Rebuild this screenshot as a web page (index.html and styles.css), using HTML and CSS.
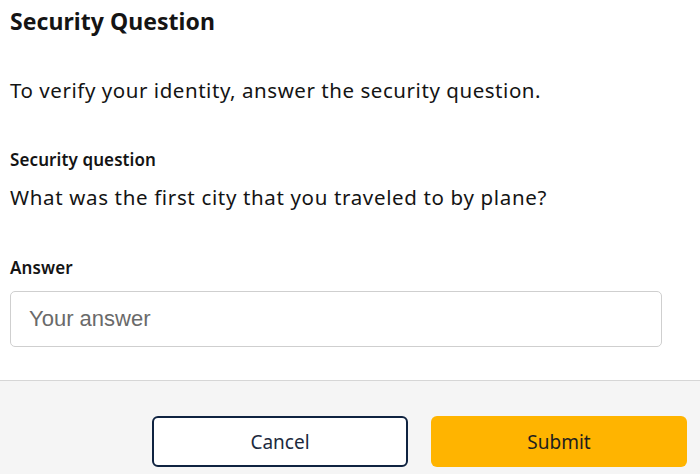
FILE: index.html
```html
<!DOCTYPE html>
<html lang="en">
<head>
    <meta charset="UTF-8">
    <meta name="viewport" content="width=device-width, initial-scale=1.0">
    <title>Security Question</title>
    <link rel="stylesheet" href="styles.css">
</head>
<body>
    <div class="dialog">
        <div class="content">
            <h2 class="title">Security Question</h2>
            <p class="intro">To verify your identity, answer the security question.</p>

            <div class="field">
                <div class="label">Security question</div>
                <div class="question">What was the first city that you traveled to by plane?</div>
            </div>

            <div class="field answer-field">
                <label class="label" for="answer">Answer</label>
                <input type="text" id="answer" class="input" placeholder="Your answer">
            </div>
        </div>

        <div class="footer">
            <button class="btn btn-cancel">Cancel</button>
            <button class="btn btn-submit">Submit</button>
        </div>
    </div>
</body>
</html>
```

FILE: styles.css
```css
body {
    margin: 0;
    font-family: 'Noto Sans', sans-serif;
    color: #141414;
    background: #fff;
}

.dialog {
    width: 700px;
    height: 474px;
    display: flex;
    flex-direction: column;
}

.content {
    box-sizing: border-box;
    height: 381px;
    padding: 6px 38px 0 10px;
    border-bottom: 1px solid #d6d6d6;
}

.title {
    margin: 0;
    font-size: 23px;
    font-weight: 700;
    line-height: 30px;
    letter-spacing: 0.05px;
}

.intro {
    margin: 41px 0 0;
    font-size: 20.5px;
    line-height: 26px;
    letter-spacing: 0.55px;
}

.field {
    margin-top: 46px;
}

.label {
    display: block;
    font-size: 17px;
    font-weight: 600;
    line-height: 22px;
    letter-spacing: 0.1px;
}

.question {
    margin-top: 13px;
    font-size: 20.5px;
    line-height: 26px;
    letter-spacing: 0.65px;
}

.answer-field {
    margin-top: 47px;
}

.input {
    display: block;
    box-sizing: border-box;
    width: 652px;
    height: 56px;
    margin-top: 12px;
    padding: 0 18px;
    border: 1px solid #cfcfcf;
    border-radius: 5px;
    font-family: 'Liberation Sans', Arial, sans-serif;
    font-size: 22px;
    color: #333;
}

.input::placeholder {
    color: #6a6a6a;
}

.footer {
    flex: 1;
    background: #f5f5f5;
    display: flex;
    justify-content: flex-end;
    align-items: flex-end;
    gap: 23px;
    padding: 0 13px 7px 0;
}

.btn {
    width: 256px;
    height: 51px;
    border-radius: 6px;
    font-family: 'Noto Sans', sans-serif;
    font-size: 19px;
    color: #1e1e1e;
    cursor: pointer;
}

.btn-cancel {
    background: #fff;
    border: 2px solid #0f2340;
    color: #1c2a3e;
}

.btn-submit {
    background: #ffb400;
    border: none;
}
```
